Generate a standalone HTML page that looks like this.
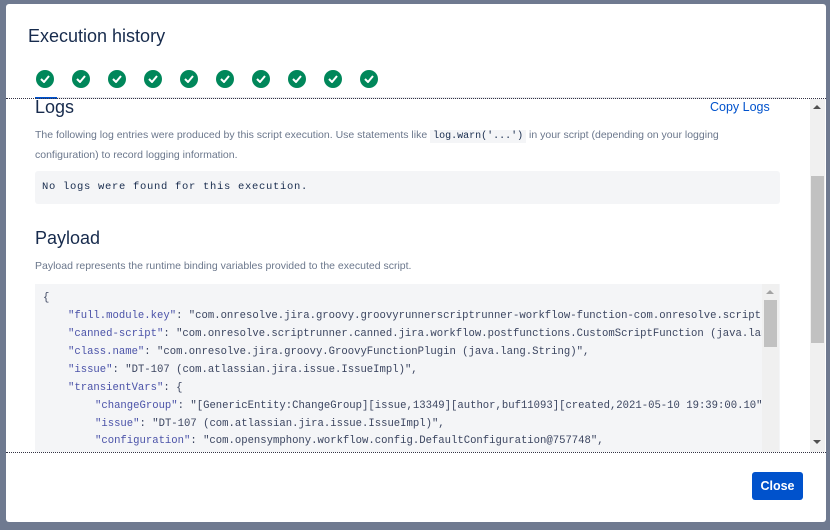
<!DOCTYPE html>
<html><head><style>
*{margin:0;padding:0;box-sizing:border-box}
body{width:830px;height:530px;background:#6f7a90;position:relative;overflow:hidden;font-family:"Liberation Sans",sans-serif;color:#172b4d}
.modal{position:absolute;left:6px;top:4px;width:820px;height:518px;background:#fff;border-radius:3px}
.abs{position:absolute}
h1{position:absolute;left:22px;top:22px;font-size:18px;font-weight:normal;color:#172b4d}
.chk{position:absolute;top:66px;width:18px;height:18px;border-radius:50%;background:#00875a}
.chk svg{position:absolute;left:4px;top:5px}
.sub{font-size:10.5px;color:#6b778c}
.mono{font-family:"Liberation Mono",monospace;font-size:10.6px;letter-spacing:0}
.k{color:#4a52a8}
.ln{position:absolute;white-space:nowrap;color:#3b4560}
</style></head><body>
<div class="modal">
<h1>Execution history</h1>
<div class="chk" style="left:30px"><svg width="10" height="8"><path d="M1 4l3 3 5-6" stroke="#fff" stroke-width="2" fill="none"/></svg></div>
<div class="chk" style="left:66px"><svg width="10" height="8"><path d="M1 4l3 3 5-6" stroke="#fff" stroke-width="2" fill="none"/></svg></div>
<div class="chk" style="left:102px"><svg width="10" height="8"><path d="M1 4l3 3 5-6" stroke="#fff" stroke-width="2" fill="none"/></svg></div>
<div class="chk" style="left:138px"><svg width="10" height="8"><path d="M1 4l3 3 5-6" stroke="#fff" stroke-width="2" fill="none"/></svg></div>
<div class="chk" style="left:174px"><svg width="10" height="8"><path d="M1 4l3 3 5-6" stroke="#fff" stroke-width="2" fill="none"/></svg></div>
<div class="chk" style="left:210px"><svg width="10" height="8"><path d="M1 4l3 3 5-6" stroke="#fff" stroke-width="2" fill="none"/></svg></div>
<div class="chk" style="left:246px"><svg width="10" height="8"><path d="M1 4l3 3 5-6" stroke="#fff" stroke-width="2" fill="none"/></svg></div>
<div class="chk" style="left:282px"><svg width="10" height="8"><path d="M1 4l3 3 5-6" stroke="#fff" stroke-width="2" fill="none"/></svg></div>
<div class="chk" style="left:318px"><svg width="10" height="8"><path d="M1 4l3 3 5-6" stroke="#fff" stroke-width="2" fill="none"/></svg></div>
<div class="chk" style="left:354px"><svg width="10" height="8"><path d="M1 4l3 3 5-6" stroke="#fff" stroke-width="2" fill="none"/></svg></div>
<div class="abs" style="left:29px;top:93px;width:762px;height:2px;background:#ebecf0"></div>
<div class="abs" style="left:29px;top:93px;width:22px;height:2px;background:#0052cc"></div>
</div>
<div class="abs" style="left:35px;top:97px;font-size:18px;color:#172b4d">Logs</div>
<div class="abs" style="left:710px;top:100px;font-size:12.5px;color:#0052cc">Copy Logs</div>
<div class="abs sub" style="left:35px;top:126px;line-height:19px;width:740px">The following log entries were produced by this script execution. Use statements like <span class="mono" style="font-size:10px;background:#f4f5f7;color:#172b4d;padding:1px 3px">log.warn('...')</span> in your script (depending on your logging configuration) to record logging information.</div>
<div class="abs" style="left:35px;top:171px;width:745px;height:33px;background:#f4f5f7;border-radius:3px"></div>
<div class="abs mono" style="left:42px;top:181px;font-size:10.5px;letter-spacing:0.7px;color:#172b4d">No logs were found for this execution.</div>
<div class="abs" style="left:35px;top:228px;font-size:18px">Payload</div>
<div class="abs sub" style="left:35px;top:260px">Payload represents the runtime binding variables provided to the executed script.</div>
<div class="abs" style="left:35px;top:284px;width:745px;height:168px;background:#f4f5f7;overflow:hidden">
<div class="mono" style="position:relative;left:0;top:0;width:727px;height:168px;overflow:hidden">
<div class="ln" style="left:8px;top:8px">{</div>
<div class="ln" style="left:33px;top:26px"><span class="k">"full.module.key"</span>: "com.onresolve.jira.groovy.groovyrunnerscriptrunner-workflow-function-com.onresolve.scriptrunner"</div>
<div class="ln" style="left:33px;top:44px"><span class="k">"canned-script"</span>: "com.onresolve.scriptrunner.canned.jira.workflow.postfunctions.CustomScriptFunction (java.lang"</div>
<div class="ln" style="left:33px;top:62px"><span class="k">"class.name"</span>: "com.onresolve.jira.groovy.GroovyFunctionPlugin (java.lang.String)",</div>
<div class="ln" style="left:33px;top:80px"><span class="k">"issue"</span>: "DT-107 (com.atlassian.jira.issue.IssueImpl)",</div>
<div class="ln" style="left:33px;top:98px"><span class="k">"transientVars"</span>: {</div>
<div class="ln" style="left:60px;top:116px"><span class="k">"changeGroup"</span>: "[GenericEntity:ChangeGroup][issue,13349][author,buf11093][created,2021-05-10 19:39:00.10"</div>
<div class="ln" style="left:60px;top:134px"><span class="k">"issue"</span>: "DT-107 (com.atlassian.jira.issue.IssueImpl)",</div>
<div class="ln" style="left:60px;top:151px"><span class="k">"configuration"</span>: "com.opensymphony.workflow.config.DefaultConfiguration@757748",</div>
</div>
</div>
<div class="abs" style="left:762px;top:284px;width:17px;height:168px;background:#f0f0f0"></div>
<div class="abs" style="left:764px;top:300px;width:13px;height:47px;background:#c1c1c1"></div>
<div class="abs" style="left:766px;top:290px;width:0;height:0;border:4px solid transparent;border-bottom-color:#a3a3a3;border-top:none"></div>
<div class="abs" style="left:810px;top:99px;width:15px;height:353px;background:#f0f0f0"></div>
<div class="abs" style="left:811px;top:176px;width:13px;height:167px;background:#c1c1c1"></div>
<div class="abs" style="left:813px;top:105px;width:0;height:0;border:4px solid transparent;border-bottom-color:#505050;border-top:none"></div>
<div class="abs" style="left:813px;top:440px;width:0;height:0;border:4px solid transparent;border-top-color:#505050;border-bottom:none"></div>
<div class="abs" style="left:6px;top:98px;width:820px;border-top:1px dotted #334;"></div>
<div class="abs" style="left:6px;top:452px;width:820px;border-top:1px dotted #334;"></div>
<div class="abs" style="left:752px;top:472px;width:51px;height:28px;background:#0052cc;border-radius:3px;color:#fff;font-size:12.5px;font-weight:bold;text-align:center;line-height:28px">Close</div>
</body></html>
